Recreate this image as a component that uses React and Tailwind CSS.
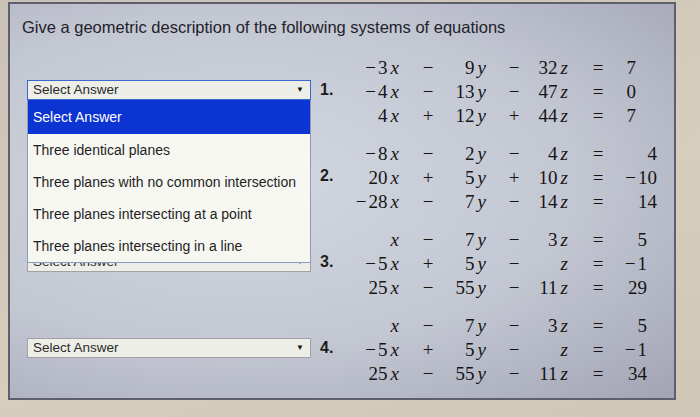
import React from 'react';

const systems = [
  {
    n: '1.',
    cols: 'grid-cols-[55px_58px_29px_56px_26px_60px_8px]',
    rows: [
      [['−3', 'x'], '−', ['9', 'y'], '−', ['32', 'z'], '7'],
      [['−4', 'x'], '−', ['13', 'y'], '−', ['47', 'z'], '0'],
      [['4', 'x'], '+', ['12', 'y'], '+', ['44', 'z'], '7'],
    ],
  },
  {
    n: '2.',
    cols: 'grid-cols-[55px_58px_29px_56px_26px_60px_29px]',
    rows: [
      [['−8', 'x'], '−', ['2', 'y'], '−', ['4', 'z'], '4'],
      [['20', 'x'], '+', ['5', 'y'], '+', ['10', 'z'], '−10'],
      [['−28', 'x'], '−', ['7', 'y'], '−', ['14', 'z'], '14'],
    ],
  },
  {
    n: '3.',
    cols: 'grid-cols-[55px_58px_29px_56px_26px_60px_19px]',
    rows: [
      [['', 'x'], '−', ['7', 'y'], '−', ['3', 'z'], '5'],
      [['−5', 'x'], '+', ['5', 'y'], '−', ['', 'z'], '−1'],
      [['25', 'x'], '−', ['55', 'y'], '−', ['11', 'z'], '29'],
    ],
  },
  {
    n: '4.',
    cols: 'grid-cols-[55px_58px_29px_56px_26px_60px_19px]',
    rows: [
      [['', 'x'], '−', ['7', 'y'], '−', ['3', 'z'], '5'],
      [['−5', 'x'], '+', ['5', 'y'], '−', ['', 'z'], '−1'],
      [['25', 'x'], '−', ['55', 'y'], '−', ['11', 'z'], '34'],
    ],
  },
];

const options = [
  'Three identical planes',
  'Three planes with no common intersection',
  'Three planes intersecting at a point',
  'Three planes intersecting in a line',
];

function Num({ value }) {
  if (value.startsWith('−')) {
    return (
      <span>
        <span className="mr-[2px]">−</span>
        {value.slice(1)}
      </span>
    );
  }
  return <span>{value}</span>;
}

function Term({ term }) {
  const [c, v] = term;
  return (
    <div className="flex justify-end whitespace-nowrap">
      {c && <Num value={c} />}
      <i className={c ? 'ml-[3px]' : ''}>{v}</i>
    </div>
  );
}

function Arrow() {
  return <span className="text-[8px] leading-none text-[#111]">▼</span>;
}

// hidden: the box sits fully under the open list
function SelectBox({ focused, hidden, children }) {
  return (
    <div
      className={
        'relative w-[284px] h-[20px] flex items-center justify-between pl-[5px] pr-[6px] bg-[#eeeee8] border ' +
        (focused ? 'border-[#3d66cf]' : 'border-[#a2a2a6]')
      }
    >
      {!hidden && <span className="text-[13.5px] text-[#2a2a2a]">Select Answer</span>}
      {!hidden && <Arrow />}
      {children}
    </div>
  );
}

function Dropdown() {
  return (
    <div className="absolute left-[-1px] top-[19px] w-[284px] z-10 bg-[#f7f7f2] border-x border-b border-[#8f9bbd]">
      <div className="h-[34px] flex items-center pl-[5px] bg-[#0b34d3] text-white text-[14px]">Select Answer</div>
      {options.map((o) => (
        <div key={o} className="h-[32px] flex items-center pl-[5px] text-[14px] text-[#1e1e1e]">
          {o}
        </div>
      ))}
    </div>
  );
}

function System({ sys, index }) {
  return (
    <div className="flex items-center h-[72px]">
      <div className="ml-[5px]">
        <SelectBox focused={index === 0} hidden={index === 1}>
          {index === 0 && <Dropdown />}
        </SelectBox>
      </div>
      <div className="ml-[9px] w-[24px] font-bold text-[16px] text-[#1c1c1c]">{sys.n}</div>
      <div className="font-['Liberation_Serif',serif] text-[19px] text-[#151515]">
        {sys.rows.map((r, i) => (
          <div key={i} className={'grid h-[24px] items-center ' + sys.cols}>
            <Term term={r[0]} />
            <div className="flex justify-center">{r[1]}</div>
            <Term term={r[2]} />
            <div className="flex justify-center">{r[3]}</div>
            <Term term={r[4]} />
            <div className="flex justify-center">=</div>
            <div className="flex justify-end whitespace-nowrap">
              <Num value={r[5]} />
            </div>
          </div>
        ))}
      </div>
    </div>
  );
}

export default function App() {
  return (
    <div className="w-[700px] h-[417px] overflow-hidden bg-[linear-gradient(160deg,#c9c3b6,#d6cebd_60%,#cfc7b6)] pt-[2px] font-['Liberation_Sans',Arial,sans-serif]">
      <div className="ml-[8px] w-[668px] h-[398px] border-2 border-[#5e5e6c] bg-[radial-gradient(ellipse_at_35%_45%,#d3d7e0_0%,#c3c7d2_55%,#a2a4b4_100%)] pl-[12px] pt-[13px]">
        <h1 className="text-[16.5px] leading-[20px] text-[#22222c]">
          Give a geometric description of the following systems of equations
        </h1>
        <div className="mt-[17px] flex flex-col gap-[14px]">
          {systems.map((s, i) => (
            <System key={s.n} sys={s} index={i} />
          ))}
        </div>
      </div>
    </div>
  );
}
